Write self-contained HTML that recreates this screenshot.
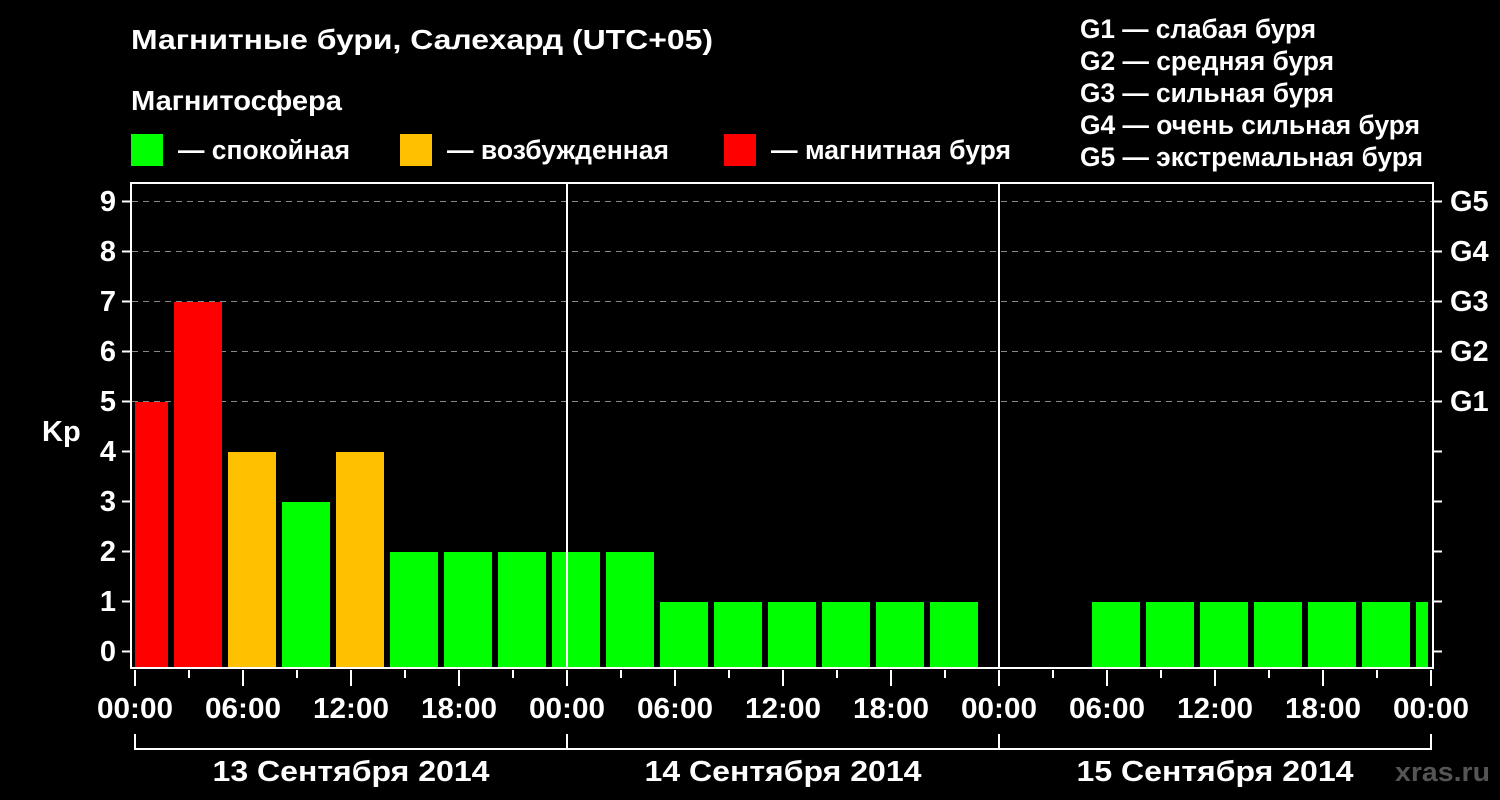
<!DOCTYPE html>
<html><head><meta charset="utf-8"><style>
html,body{margin:0;padding:0;background:#000;width:1500px;height:800px;overflow:hidden}
svg{display:block}
text{font-family:"Liberation Sans",sans-serif;font-weight:bold;fill:#fff;font-size:27px}
.t{font-size:29px}
.h{font-size:28px}
</style></head><body>
<svg width="1500" height="800" viewBox="0 0 1500 800">
<rect width="1500" height="800" fill="#000"/>
<text class="h" x="131" y="49" textLength="582" lengthAdjust="spacingAndGlyphs">Магнитные бури, Салехард (UTC+05)</text>
<text class="h" x="131" y="110" textLength="211" lengthAdjust="spacingAndGlyphs">Магнитосфера</text>
<rect x="131" y="134" width="32" height="32" fill="#00ff00"/>
<text x="178" y="159" textLength="172" lengthAdjust="spacingAndGlyphs">— спокойная</text>
<rect x="400" y="134" width="32" height="32" fill="#ffc000"/>
<text x="447" y="159" textLength="222" lengthAdjust="spacingAndGlyphs">— возбужденная</text>
<rect x="724" y="134" width="32" height="32" fill="#ff0000"/>
<text x="771" y="159" textLength="240" lengthAdjust="spacingAndGlyphs">— магнитная буря</text>
<text x="1080" y="38" textLength="236" lengthAdjust="spacingAndGlyphs">G1 — слабая буря</text>
<text x="1080" y="70" textLength="254" lengthAdjust="spacingAndGlyphs">G2 — средняя буря</text>
<text x="1080" y="102" textLength="254" lengthAdjust="spacingAndGlyphs">G3 — сильная буря</text>
<text x="1080" y="134" textLength="340" lengthAdjust="spacingAndGlyphs">G4 — очень сильная буря</text>
<text x="1080" y="166" textLength="343" lengthAdjust="spacingAndGlyphs">G5 — экстремальная буря</text>
<g stroke="#888" stroke-width="1" stroke-dasharray="6,5">
<line x1="132" y1="201.5" x2="1432" y2="201.5"/><line x1="132" y1="251.5" x2="1432" y2="251.5"/>
<line x1="132" y1="301.5" x2="1432" y2="301.5"/><line x1="132" y1="351.5" x2="1432" y2="351.5"/>
<line x1="132" y1="401.5" x2="1432" y2="401.5"/>
</g>
<defs><clipPath id="c"><rect x="135" y="183" width="1293" height="485"/></clipPath></defs>
<g clip-path="url(#c)">
<rect x="120" y="402" width="48" height="266" fill="#ff0000"/>
<rect x="174" y="302" width="48" height="366" fill="#ff0000"/>
<rect x="228" y="452" width="48" height="216" fill="#ffc000"/>
<rect x="282" y="502" width="48" height="166" fill="#00ff00"/>
<rect x="336" y="452" width="48" height="216" fill="#ffc000"/>
<g fill="#00ff00">
<rect x="390" y="552" width="48" height="116"/><rect x="444" y="552" width="48" height="116"/>
<rect x="498" y="552" width="48" height="116"/><rect x="552" y="552" width="48" height="116"/>
<rect x="606" y="552" width="48" height="116"/>
<rect x="660" y="602" width="48" height="66"/><rect x="714" y="602" width="48" height="66"/>
<rect x="768" y="602" width="48" height="66"/><rect x="822" y="602" width="48" height="66"/>
<rect x="876" y="602" width="48" height="66"/><rect x="930" y="602" width="48" height="66"/>
<rect x="1092" y="602" width="48" height="66"/><rect x="1146" y="602" width="48" height="66"/>
<rect x="1200" y="602" width="48" height="66"/><rect x="1254" y="602" width="48" height="66"/>
<rect x="1308" y="602" width="48" height="66"/><rect x="1362" y="602" width="48" height="66"/>
<rect x="1416" y="602" width="48" height="66"/>
</g>
</g>
<g stroke="#fff" stroke-width="2" fill="none">
<rect x="131" y="183" width="1302" height="485"/>
<line x1="567" y1="183" x2="567" y2="668"/><line x1="999" y1="183" x2="999" y2="668"/>
<path d="M122 201.5h9M122 251.5h9M122 301.5h9M122 351.5h9M122 401.5h9M122 451.5h9M122 501.5h9M122 551.5h9M122 601.5h9M122 651.5h9"/>
<path d="M1433 201.5h9M1433 251.5h9M1433 301.5h9M1433 351.5h9M1433 401.5h9M1433 451.5h9M1433 501.5h9M1433 551.5h9M1433 601.5h9M1433 651.5h9"/>
<path d="M135 670v16M189 670v8M243 670v16M297 670v8M351 670v16M405 670v8M459 670v16M513 670v8M567 670v16M621 670v8M675 670v16M729 670v8M783 670v16M837 670v8M891 670v16M945 670v8M999 670v16M1053 670v8M1107 670v16M1161 670v8M1215 670v16M1269 670v8M1323 670v16M1377 670v8M1431 670v16"/>
<path d="M135 734v15H1431v-15M567 734v15M999 734v15"/>
</g>
<g text-anchor="end">
<text class="t" x="116" y="211">9</text><text class="t" x="116" y="261">8</text><text class="t" x="116" y="311">7</text>
<text class="t" x="116" y="361">6</text><text class="t" x="116" y="411">5</text><text class="t" x="116" y="461">4</text>
<text class="t" x="116" y="511">3</text><text class="t" x="116" y="561">2</text><text class="t" x="116" y="611">1</text>
<text class="t" x="116" y="661">0</text>
</g>
<text class="t" x="1450" y="211">G5</text><text class="t" x="1450" y="261">G4</text><text class="t" x="1450" y="311">G3</text>
<text class="t" x="1450" y="361">G2</text><text class="t" x="1450" y="411">G1</text>
<text class="t" x="42" y="441">Kp</text>
<g text-anchor="middle">
<text class="t" x="135" y="718" textLength="76" lengthAdjust="spacingAndGlyphs">00:00</text><text class="t" x="243" y="718" textLength="76" lengthAdjust="spacingAndGlyphs">06:00</text><text class="t" x="351" y="718" textLength="76" lengthAdjust="spacingAndGlyphs">12:00</text>
<text class="t" x="459" y="718" textLength="76" lengthAdjust="spacingAndGlyphs">18:00</text><text class="t" x="567" y="718" textLength="76" lengthAdjust="spacingAndGlyphs">00:00</text><text class="t" x="675" y="718" textLength="76" lengthAdjust="spacingAndGlyphs">06:00</text>
<text class="t" x="783" y="718" textLength="76" lengthAdjust="spacingAndGlyphs">12:00</text><text class="t" x="891" y="718" textLength="76" lengthAdjust="spacingAndGlyphs">18:00</text><text class="t" x="999" y="718" textLength="76" lengthAdjust="spacingAndGlyphs">00:00</text>
<text class="t" x="1107" y="718" textLength="76" lengthAdjust="spacingAndGlyphs">06:00</text><text class="t" x="1215" y="718" textLength="76" lengthAdjust="spacingAndGlyphs">12:00</text><text class="t" x="1323" y="718" textLength="76" lengthAdjust="spacingAndGlyphs">18:00</text>
<text class="t" x="1431" y="718" textLength="76" lengthAdjust="spacingAndGlyphs">00:00</text>
<text class="t" x="351" y="781" textLength="277" lengthAdjust="spacingAndGlyphs">13 Сентября 2014</text>
<text class="t" x="783" y="781" textLength="277" lengthAdjust="spacingAndGlyphs">14 Сентября 2014</text>
<text class="t" x="1215" y="781" textLength="277" lengthAdjust="spacingAndGlyphs">15 Сентября 2014</text>
</g>
<text x="1395" y="781" textLength="95" lengthAdjust="spacingAndGlyphs" style="fill:#555">xras.ru</text>
</svg>
</body></html>
